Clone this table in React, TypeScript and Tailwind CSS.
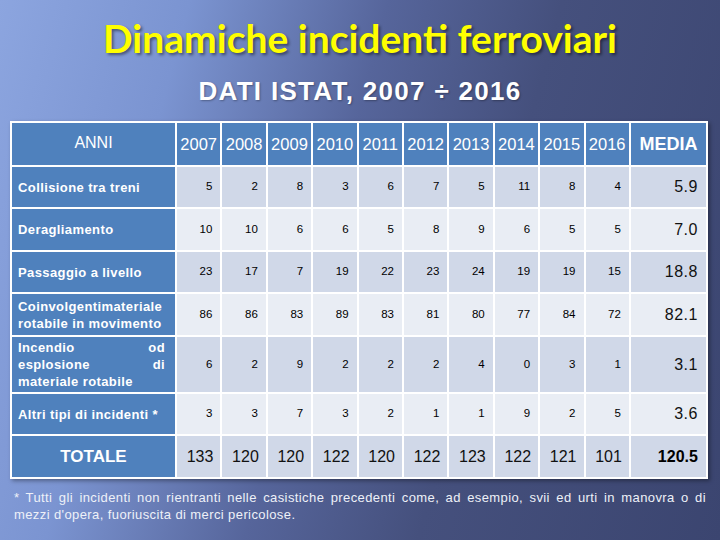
const years = ['2007', '2008', '2009', '2010', '2011', '2012', '2013', '2014', '2015', '2016'];

type Row = { label: React.ReactNode; values: number[]; media: string; h: string };

const rows: Row[] = [
  { label: 'Collisione tra treni', values: [5, 2, 8, 3, 6, 7, 5, 11, 8, 4], media: '5.9', h: 'h-[42px]' },
  { label: 'Deragliamento', values: [10, 10, 6, 6, 5, 8, 9, 6, 5, 5], media: '7.0', h: 'h-[43px]' },
  { label: 'Passaggio a livello', values: [23, 17, 7, 19, 22, 23, 24, 19, 19, 15], media: '18.8', h: 'h-[42px]' },
  {
    label: (
      <>
        Coinvolgentimateriale
        <br />
        rotabile in movimento
      </>
    ),
    values: [86, 86, 83, 89, 83, 81, 80, 77, 84, 72],
    media: '82.1',
    h: 'h-[43px]',
  },
  {
    label: (
      <>
        <span className="flex justify-between">
          <span>Incendio</span>
          <span>od</span>
        </span>
        <span className="flex justify-between">
          <span>esplosione</span>
          <span>di</span>
        </span>
        <span className="block">materiale rotabile</span>
      </>
    ),
    values: [6, 2, 9, 2, 2, 2, 4, 0, 3, 1],
    media: '3.1',
    h: 'h-[57px]',
  },
  { label: 'Altri tipi di incidenti *', values: [3, 3, 7, 3, 2, 1, 1, 9, 2, 5], media: '3.6', h: 'h-[42px]' },
];

const totals = [133, 120, 120, 122, 120, 122, 123, 122, 121, 101];

export default function App() {
  return (
    <div className="w-[720px] h-[540px] overflow-hidden flex flex-col bg-[linear-gradient(105deg,#8ca5df_0%,#7b94d1_22%,#56659b_45%,#45507d_65%,#3b4570_100%)] font-['Liberation_Sans',Arial,sans-serif]">
      <h1 className="mt-[15px] text-center text-[39px] leading-[46px] font-bold text-[#ffff00] font-['Lato',sans-serif] [text-shadow:2px_2px_3px_rgba(0,0,0,0.45)]">
        Dinamiche incidenti ferroviari
      </h1>
      <div className="mt-[15px] text-center text-[26px] leading-[30px] font-bold tracking-[1.3px] text-white [text-shadow:1px_1px_2px_rgba(0,0,0,0.3)]">
        DATI ISTAT, 2007 ÷ 2016
      </div>

      <div className="mt-[15px] pl-[10px]">
        <table className="w-[696px] table-fixed border-collapse border-2 border-white shadow-[2px_2px_4px_rgba(0,0,0,0.35)]">
          <colgroup>
            <col className="w-[165px]" />
            {years.map((y) => (
              <col key={y} className="w-[45.4px]" />
            ))}
            <col className="w-[77px]" />
          </colgroup>
          <thead>
            <tr className="h-[44px] bg-[#4f81bd] text-white">
              <th className="border-2 border-white text-[16px] font-normal text-center align-middle pb-[2px]">ANNI</th>
              {years.map((y) => (
                <th key={y} className="border-2 border-white text-[16.5px] font-normal text-center px-0">
                  {y}
                </th>
              ))}
              <th className="border-2 border-white text-[18px] font-bold text-center">MEDIA</th>
            </tr>
          </thead>
          <tbody>
            {rows.map((r, i) => {
              const bg = i % 2 === 0 ? 'bg-[#d0d8e8]' : 'bg-[#e9edf4]';
              return (
                <tr key={i} className={r.h}>
                  <td className="border-2 border-white bg-[#4f81bd] text-white font-bold text-[13px] tracking-[0.4px] leading-[17px] pl-[6px] pr-[10px] text-left align-middle">
                    {r.label}
                  </td>
                  {r.values.map((v, j) => (
                    <td key={j} className={`border-2 border-white ${bg} text-black text-[11.5px] text-right pr-[8px]`}>
                      {v}
                    </td>
                  ))}
                  <td className={`border-2 border-white ${bg} text-[#111] text-[16px] tracking-[0.5px] text-right pr-[8px]`}>
                    {r.media}
                  </td>
                </tr>
              );
            })}
            <tr className="h-[43px] bg-[#d0d8e8]">
              <td className="border-2 border-white bg-[#4f81bd] text-white font-bold text-[17px] text-center">TOTALE</td>
              {totals.map((v, j) => (
                <td key={j} className="border-2 border-white text-[#111] text-[16px] text-right pr-[7px]">
                  {v}
                </td>
              ))}
              <td className="border-2 border-white text-black text-[16px] font-bold text-right pr-[8px]">120.5</td>
            </tr>
          </tbody>
        </table>
      </div>

      <p className="mt-[10px] px-[14px] text-[13px] leading-[17px] tracking-[0.4px] text-[#eef1f8]">
        <span className="block text-justify [text-align-last:justify]">
          * Tutti gli incidenti non rientranti nelle casistiche precedenti come, ad esempio, svii ed urti in manovra o di
        </span>
        <span className="block">mezzi d'opera, fuoriuscita di merci pericolose.</span>
      </p>
    </div>
  );
}
